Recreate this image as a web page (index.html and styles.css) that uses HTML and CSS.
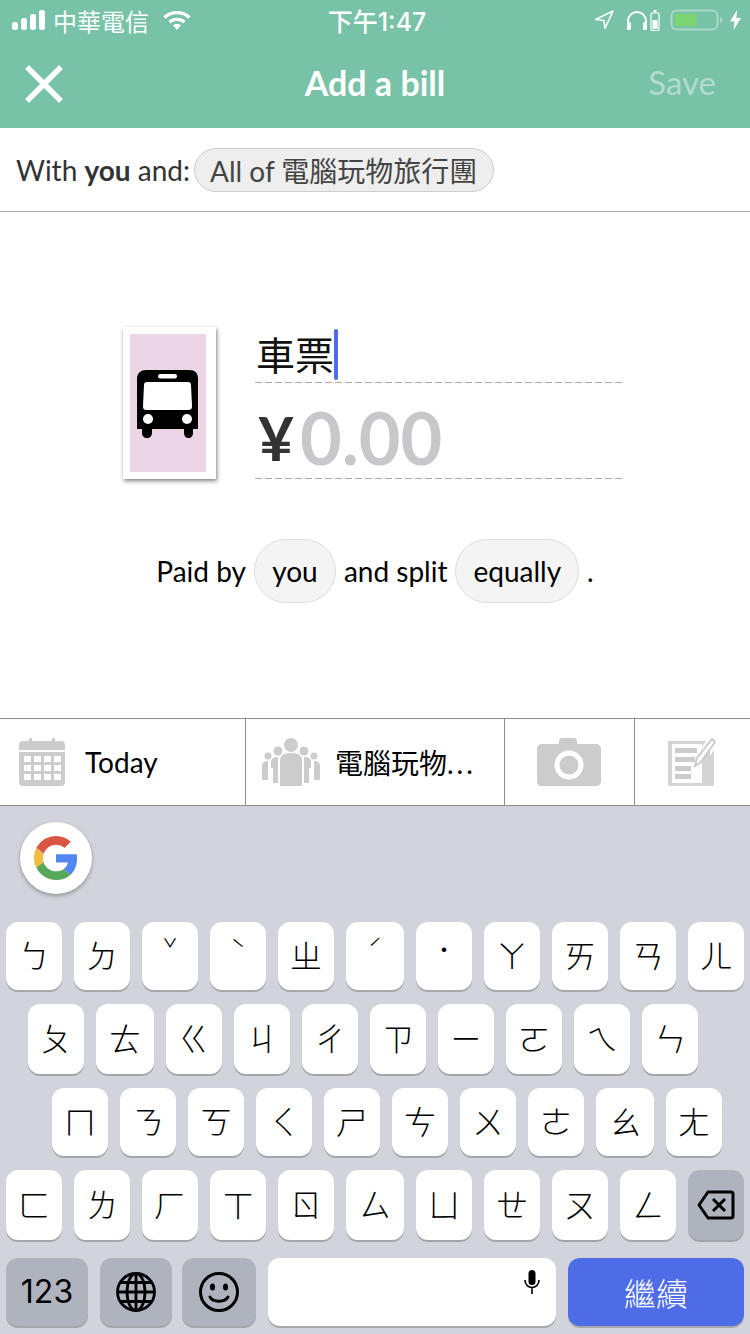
FILE: index.html
```html
<!DOCTYPE html>
<html lang="zh-Hant">
<head>
<meta charset="utf-8">
<title>Add a bill</title>
<link rel="stylesheet" href="styles.css">
</head>
<body>
<div class="screen">
  <header class="head">
    <div class="status">
      <div class="status-left">
        <svg class="signal" width="34" height="20" viewBox="0 0 34 20"><g fill="#fff"><rect x="0" y="12" width="6" height="8" rx="2.5"/><rect x="9" y="8" width="6" height="12" rx="2.5"/><rect x="18" y="4" width="6" height="16" rx="2.5"/><rect x="27" y="0" width="6" height="20" rx="2.5"/></g></svg>
        <span class="carrier">中華電信</span>
        <svg class="wifi" width="28" height="20" viewBox="0 0 28 20"><g fill="none" stroke="#fff" stroke-width="3.4"><path d="M1.5 7.5C8.500 1 19.500 1 26.500 7.500"/><path d="M6.500 12C10.500 8.500 17.500 8.500 21.500 12"/></g><path d="M10 15.200C12.200 13.500 15.800 13.500 18 15.200L14 20Z" fill="#fff"/></svg>
      </div>
      <span class="time">下午1:47</span>
      <div class="status-right">
        <svg class="loc" width="20" height="20" viewBox="0 0 20 20"><path d="M19 1L1.500 9.500L10 10.500L11 18.500Z" fill="none" stroke="#fff" stroke-width="1.600" stroke-linejoin="round"/></svg>
        <svg class="phones" width="22" height="20" viewBox="0 0 22 20"><path d="M2 15V11A9 9 0 0 1 20 11V15" fill="none" stroke="#fff" stroke-width="2"/><rect x="1" y="12" width="4" height="8" rx="1.500" fill="#fff"/><rect x="17" y="12" width="4" height="8" rx="1.500" fill="#fff"/></svg>
        <svg class="mini" width="10" height="21" viewBox="0 0 10 21"><rect x="3.500" y="0" width="3" height="2" fill="#fff"/><rect x="1" y="3" width="8" height="17.500" rx="1" fill="none" stroke="#fff" stroke-width="1.200"/><rect x="2.500" y="10" width="5" height="9" fill="#fff"/></svg>
        <svg class="batt" width="54" height="22" viewBox="0 0 54 22"><rect x="1.500" y="1.500" width="46" height="19" rx="5" fill="none" stroke="#a9d9c8" stroke-width="2"/><rect x="5" y="5" width="21.500" height="12" fill="#7bd672"/><path d="M50 7.500L53 11L50 14.500Z" fill="#a9d9c8"/></svg>
        <svg class="bolt" width="11" height="20" viewBox="0 0 11 20"><path d="M7 0L0 11.500H4.500L3.500 20L11 8H6.500Z" fill="#fff"/></svg>
      </div>
    </div>
    <nav class="nav">
      <svg class="close" width="38" height="38" viewBox="0 0 38 38"><path d="M2 2L36 36M36 2L2 36" stroke="#fff" stroke-width="5.500" fill="none"/></svg>
      <h1 class="title">Add a bill</h1>
      <span class="save">Save</span>
    </nav>
  </header>

  <section class="with">
    <span>With <b>you</b> and:</span>
    <span class="group-chip">All of 電腦玩物旅行團</span>
  </section>

  <main class="main">
    <div class="form">
      <div class="card">
        <div class="card-inner">
          <svg width="62" height="68" viewBox="0 0 62 68">
            <path d="M0 9C0 3 4 0 9 0H52C58 0 61 3 61 9V59H56V63C56 70 47 70 47 63V59H15V63C15 70 5 70 5 63V59H0Z" fill="#000"/>
            <rect x="21" y="4" width="19" height="4.500" rx="2.200" fill="#fff"/>
            <path d="M10 12H51C53 12 54 13 54 15L55 36C55 39 54 40 51 40H10C7 40 6 39 6 36L7 15C7 13 8 12 10 12Z" fill="#fff"/>
            <circle cx="11" cy="49" r="5" fill="#fff"/>
            <circle cx="50" cy="49" r="5" fill="#fff"/>
          </svg>
        </div>
      </div>
      <div class="fields">
        <div class="field field-name"><span class="name-text">車票</span><i class="caret"></i></div>
        <div class="field field-amount"><span class="cur">¥</span><span class="amt">0.00</span></div>
      </div>
    </div>
    <p class="sentence">
      <span>Paid by</span><span class="pick pick-you">you</span><span>and split</span><span class="pick">equally</span><span>.</span>
    </p>
  </main>

  <section class="tools">
    <div class="tool tool-date">
      <svg width="46" height="48" viewBox="0 0 46 48"><path d="M4 3H10V1C10-.5 13-.5 13 1V3H33V1C33-.5 36-.5 36 1V3H42C44.500 3 46 4.500 46 7V12H0V7C0 4.500 1.500 3 4 3Z" fill="#ccc"/><path d="M0 14H46V44C46 46.500 44.500 48 42 48H4C1.500 48 0 46.500 0 44Z" fill="#ccc"/><g fill="#fff"><rect x="5" y="18" width="7" height="6"/><rect x="15" y="18" width="7" height="6"/><rect x="25" y="18" width="7" height="6"/><rect x="35" y="18" width="7" height="6"/><rect x="5" y="27" width="7" height="6"/><rect x="15" y="27" width="7" height="6"/><rect x="25" y="27" width="7" height="6"/><rect x="35" y="27" width="7" height="6"/><rect x="5" y="36" width="7" height="6"/><rect x="15" y="36" width="7" height="6"/><rect x="25" y="36" width="7" height="6"/><rect x="35" y="36" width="7" height="6"/></g></svg>
      <span>Today</span>
    </div>
    <div class="tool tool-group">
      <svg width="58" height="48" viewBox="0 0 58 48"><g fill="#ccc"><circle cx="29" cy="7" r="7"/><path d="M18 23C18 17 22 15 29 15C36 15 40 17 40 23V48H18Z"/><circle cx="16" cy="13" r="4.500"/><circle cx="42" cy="13" r="4.500"/><path d="M9 24C9 20 12 19 16 19V45H11V30H9Z"/><path d="M49 24C49 20 46 19 42 19V45H47V30H49Z"/><circle cx="6" cy="18" r="3.500"/><circle cx="52" cy="18" r="3.500"/><path d="M0 28C0 24 3 23 6 23V42H0Z"/><path d="M58 28C58 24 55 23 52 23V42H58Z"/></g></svg>
      <span>電腦玩物<span class="dots">...</span></span>
    </div>
    <div class="tool tool-cam">
      <svg width="64" height="48" viewBox="0 0 64 48"><path d="M5 6H22V3C22 1 23 0 25 0H37C39 0 40 1 40 3V6H59C62 6 64 8 64 11V43C64 46 62 48 59 48H5C2 48 0 46 0 43V11C0 8 2 6 5 6Z" fill="#ccc"/><circle cx="32" cy="27" r="12" fill="#ccc" stroke="#fff" stroke-width="5"/></svg>
    </div>
    <div class="tool tool-note">
      <svg width="48" height="48" viewBox="0 0 48 48"><path d="M0 3H38L30 14V17L26 31L33 29L42 18L46 12V46C46 47 45 48 44 48H2C1 48 0 47 0 46Z" fill="#d4d4d4"/><rect x="4" y="6" width="30" height="39" fill="#fff"/><g fill="#ccc"><rect x="7" y="10" width="22" height="5"/><rect x="7" y="19" width="20" height="5"/><rect x="7" y="28" width="16" height="5"/><rect x="7" y="36" width="16" height="5"/></g><path d="M34 22V44H42V10Z" fill="#d4d4d4"/><path d="M44 1L47 4L33 24L27 28L29 20Z" fill="#fff" stroke="#ccc" stroke-width="2"/></svg>
    </div>
  </section>

  <section class="kb">
    <div class="kb-top">
      <div class="g-btn">
        <svg width="44" height="44" viewBox="0 0 48 48">
          <path fill="#db5543" d="M24 9.500c3.540 0 6.710 1.220 9.210 3.600l6.850-6.850C35.900 2.380 30.470 0 24 0 14.620 0 6.510 5.380 2.560 13.220l7.980 6.190C12.430 13.720 17.740 9.500 24 9.500z"/>
          <path fill="#5286f0" d="M46.980 24.550c0-1.570-.15-3.090-.38-4.550H24v9.020h12.940c-.58 2.960-2.260 5.480-4.780 7.180l7.730 6c4.510-4.180 7.090-10.360 7.090-17.650z"/>
          <path fill="#f0bc42" d="M10.530 28.590c-.48-1.450-.76-2.990-.76-4.590s.27-3.140.76-4.590l-7.980-6.190C.92 16.460 0 20.120 0 24c0 3.880.92 7.540 2.560 10.780l7.970-6.190z"/>
          <path fill="#58a85c" d="M24 48c6.480 0 11.930-2.130 15.890-5.810l-7.730-6c-2.150 1.450-4.920 2.300-8.160 2.300-6.260 0-11.570-4.220-13.470-9.910l-7.980 6.190C6.510 42.620 14.620 48 24 48z"/>
        </svg>
      </div>
    </div>
    <div class="row row-a">
      <span class="key">ㄅ</span><span class="key">ㄉ</span><span class="key tone">ˇ</span><span class="key tone">ˋ</span><span class="key">ㄓ</span><span class="key wide tone">ˊ</span><span class="key tone">˙</span><span class="key">ㄚ</span><span class="key">ㄞ</span><span class="key">ㄢ</span><span class="key">ㄦ</span>
    </div>
    <div class="row row-b">
      <span class="key">ㄆ</span><span class="key wide">ㄊ</span><span class="key">ㄍ</span><span class="key">ㄐ</span><span class="key">ㄔ</span><span class="key">ㄗ</span><span class="key">ㄧ</span><span class="key">ㄛ</span><span class="key">ㄟ</span><span class="key">ㄣ</span>
    </div>
    <div class="row row-c">
      <span class="key">ㄇ</span><span class="key">ㄋ</span><span class="key">ㄎ</span><span class="key">ㄑ</span><span class="key">ㄕ</span><span class="key">ㄘ</span><span class="key">ㄨ</span><span class="key">ㄜ</span><span class="key wide">ㄠ</span><span class="key">ㄤ</span>
    </div>
    <div class="row row-d">
      <span class="key">ㄈ</span><span class="key">ㄌ</span><span class="key">ㄏ</span><span class="key">ㄒ</span><span class="key">ㄖ</span><span class="key wide">ㄙ</span><span class="key">ㄩ</span><span class="key">ㄝ</span><span class="key">ㄡ</span><span class="key">ㄥ</span>
      <span class="key dark">
        <svg width="38" height="30" viewBox="0 0 38 30"><path d="M11 2H34C35.500 2 36 2.500 36 4V26C36 27.500 35.500 28 34 28H11L2 15Z" fill="none" stroke="#000" stroke-width="3" stroke-linejoin="round"/><path d="M16 9L28 21M28 9L16 21" stroke="#000" stroke-width="3" fill="none"/></svg>
      </span>
    </div>
    <div class="row row-e">
      <span class="key dark k-123">123</span>
      <span class="key dark k-globe">
        <svg width="40" height="40" viewBox="0 0 40 40"><g fill="none" stroke="#000" stroke-width="2.800"><circle cx="20" cy="20" r="18.500"/><ellipse cx="20" cy="20" rx="9" ry="18.500"/><path d="M20 1.500V38.500M1.500 20H38.500M4.500 10.500H35.500M4.500 29.500H35.500"/></g></svg>
      </span>
      <span class="key dark k-emoji">
        <svg width="40" height="40" viewBox="0 0 40 40"><circle cx="20" cy="20" r="18.500" fill="none" stroke="#000" stroke-width="3"/><ellipse cx="13.500" cy="15" rx="2.500" ry="3.500"/><ellipse cx="26.500" cy="15" rx="2.500" ry="3.500"/><path d="M11 25C14 30.500 26 30.500 29 25" fill="none" stroke="#000" stroke-width="3" stroke-linecap="round"/></svg>
      </span>
      <span class="key k-space">
        <svg width="16" height="24" viewBox="0 0 16 24"><rect x="4.500" y="0" width="7" height="15" rx="3.500"/><path d="M1 10C1 20 15 20 15 10M8 18V24" fill="none" stroke="#000" stroke-width="1.600"/></svg>
      </span>
      <span class="key k-go">繼續</span>
    </div>
  </section>
</div>
</body>
</html>
```
FILE: styles.css
```css
* { box-sizing: border-box; }
html, body { margin: 0; padding: 0; }
body { width: 750px; height: 1334px; overflow: hidden; background: #fff; font-family: Lato, "Noto Sans CJK TC", sans-serif; color: #000; }
.screen { width: 750px; height: 1334px; display: flex; flex-direction: column; }

.head { background: #78c2a8; height: 128px; color: #fff; flex: none; }
.status { height: 40px; display: flex; align-items: center; padding: 0 9px 0 12px; position: relative; }
.status-left { display: flex; align-items: center; }
.carrier { font: 400 24px "Noto Sans CJK TC", sans-serif; margin-left: 7px; }
.wifi { margin-left: 14px; }
.time { position: absolute; left: 4px; right: 0; text-align: center; font: 500 25px Inter, "Noto Sans CJK TC", sans-serif; }
.status-right { margin-left: auto; display: flex; align-items: center; }
.phones { margin-left: 12px; }
.mini { margin-left: 2px; }
.batt { margin-left: 10px; }
.bolt { margin-left: 6px; }

.nav { height: 88px; display: flex; align-items: center; justify-content: space-between; padding: 0 34px 0 25px; position: relative; }
.title { position: absolute; left: 0; right: 0; top: 22px; margin: 0; text-align: center; font: 700 34px Lato, sans-serif; }
.save { font: 400 33px Lato, sans-serif; color: rgba(255,255,255,.45); margin-top: -4px; }

.with { height: 84px; flex: none; display: flex; align-items: center; gap: 4px; padding: 0 0 0 16px; border-bottom: 1px solid #a8a8a8; font-size: 28px; color: #333; }
.group-chip { height: 44px; width: 300px; padding-left: 15px; display: flex; align-items: center; background: #eee; border: 1px solid #ccc; border-radius: 22px; color: #444; }

.main { flex: 1; padding-top: 115px; }
.form { display: flex; padding-left: 123px; }
.card { width: 93px; height: 152px; padding: 7px 10px 7px 7px; background: #fff; box-shadow: 1px 2px 4px rgba(0,0,0,.5); }
.card-inner { height: 100%; background: #edd5e8; display: flex; justify-content: center; align-items: center; padding-top: 2px; }
.fields { width: 368px; margin-left: 39px; }
.field { background: repeating-linear-gradient(90deg, #aaa 0 7px, transparent 7px 10px) left bottom / 100% 1px no-repeat; display: flex; }
.field-name { height: 56px; padding: 0 0 0 1px; font: 400 39px "Noto Sans CJK TC", sans-serif; color: #111; align-items: center; }
.name-text { margin-bottom: 5px; }
.caret { width: 4px; height: 51px; background: #4f6be8; border-radius: 2px; align-self: flex-start; margin-top: 2px; }
.field-amount { height: 96px; align-items: center; padding: 12px 0 0 3px; }
.cur { font: 700 62px Lato, "Noto Sans CJK TC", sans-serif; color: #333; }
.amt { font: 700 72px Lato, sans-serif; color: #c8c8cc; margin-left: 6px; }

.sentence { margin: 60px 0 0; display: flex; justify-content: center; align-items: center; gap: 8px; font-size: 28px; }
.pick { height: 64px; padding: 0 17px; display: flex; align-items: center; background: #f4f4f4; border: 1px solid #ddd; border-radius: 32px; }
.pick-you { width: 82px; justify-content: center; padding: 0; }

.tools { height: 88px; flex: none; display: flex; border-top: 1px solid #8f8f8f; border-bottom: 1px solid #8f8f8f; }
.tool { display: flex; align-items: center; border-right: 1px solid #8f8f8f; font-size: 28px; }
.tool-date { width: 246px; padding-left: 19px; gap: 20px; }
.tool-group { width: 259px; padding-left: 16px; gap: 15px; }
.dots { letter-spacing: 3px; }
.tool-cam { width: 130px; padding-left: 32px; }
.tool-note { flex: 1; padding-left: 33px; border-right: 0; }

.kb { flex: none; height: 528px; background: #d1d5db; }
.kb-top { height: 116px; padding: 16px 0 0 20px; }
.g-btn { width: 72px; height: 72px; border-radius: 50%; background: #fff; box-shadow: 0 2px 4px rgba(0,0,0,.3); display: flex; align-items: center; justify-content: center; }
.row { display: flex; gap: 12px; height: 68px; margin-bottom: 14px; }
.row-a { padding-left: 6px; }
.row-b { padding-left: 28px; height: 70px; }
.row-c { padding-left: 52px; }
.row-d { padding-left: 6px; height: 70px; margin-bottom: 18px; }
.row-e { padding-left: 6px; margin-bottom: 0; }
.key { width: 56px; height: 100%; display: flex; align-items: center; justify-content: center; background: #fff; border-radius: 12px; box-shadow: 0 2px 0 rgba(0,0,0,.22); font: 300 32px "Noto Sans CJK TC", sans-serif; color: #000; padding-bottom: 4px; }
.wide { width: 58px; }
.tone { align-items: flex-start; padding: 8px 0 0; font-size: 26px; }
.dark { background: #aeb3be; padding: 0; }
.k-123 { width: 82px; font: 400 32px Inter, sans-serif; padding: 0 0 2px; }
.k-globe { width: 72px; }
.k-emoji { width: 74px; margin-left: -2px; }
.k-space { width: 288px; justify-content: flex-end; align-items: flex-start; padding: 12px 16px 0 0; }
.k-go { width: 176px; background: #4d6ce6; color: #fff; padding: 0; }
```
